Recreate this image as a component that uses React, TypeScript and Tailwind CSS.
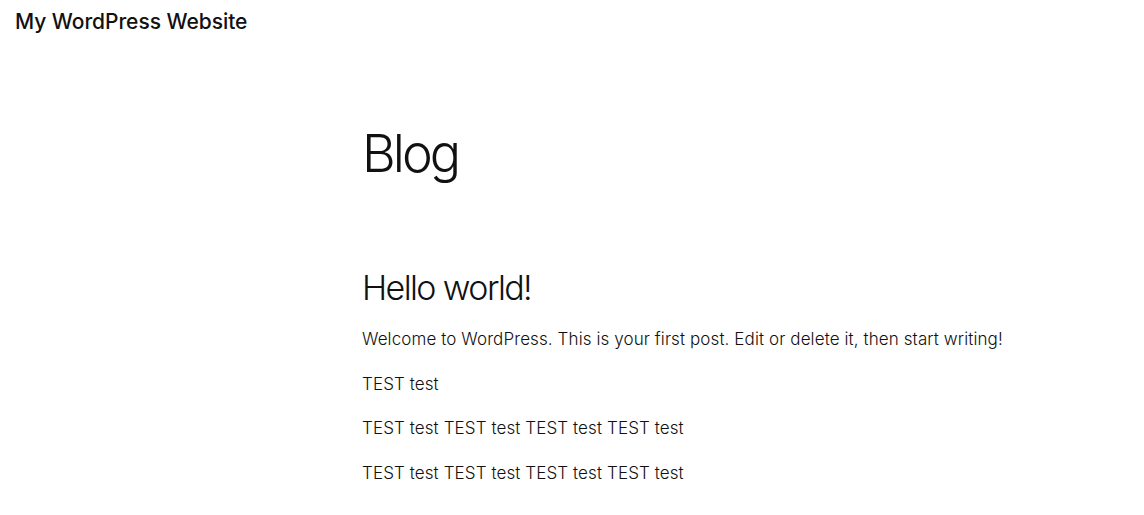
export default function App() {
  const lines = [
    'Welcome to WordPress. This is your first post. Edit or delete it, then start writing!',
    'TEST test',
    'TEST test TEST test TEST test TEST test',
    'TEST test TEST test TEST test TEST test',
  ];

  return (
    <div
      className="min-h-[515px] bg-white text-[#111111]"
      style={{ fontFamily: 'Inter, "Noto Sans", sans-serif' }}
    >
      <header className="px-[15px] pt-[10px]">
        <p className="text-[21px] font-medium leading-[24px] tracking-[-0.05px]">
          My WordPress Website
        </p>
      </header>

      <main className="pl-[362px]">
        <h1 className="mt-[88px] text-[52px] font-light leading-[64px] tracking-[-3px]">
          Blog
        </h1>

        <article className="mt-[82px]">
          <h2 className="text-[34px] font-light leading-[40px] tracking-[-1.6px]">
            Hello world!
          </h2>
          <div className="mt-[17px] flex flex-col gap-[16.5px]">
            {lines.map((line, i) => (
              <p key={i} className="text-[17px] font-light leading-[28px] tracking-[0.1px]">
                {line}
              </p>
            ))}
          </div>
        </article>
      </main>
    </div>
  );
}
